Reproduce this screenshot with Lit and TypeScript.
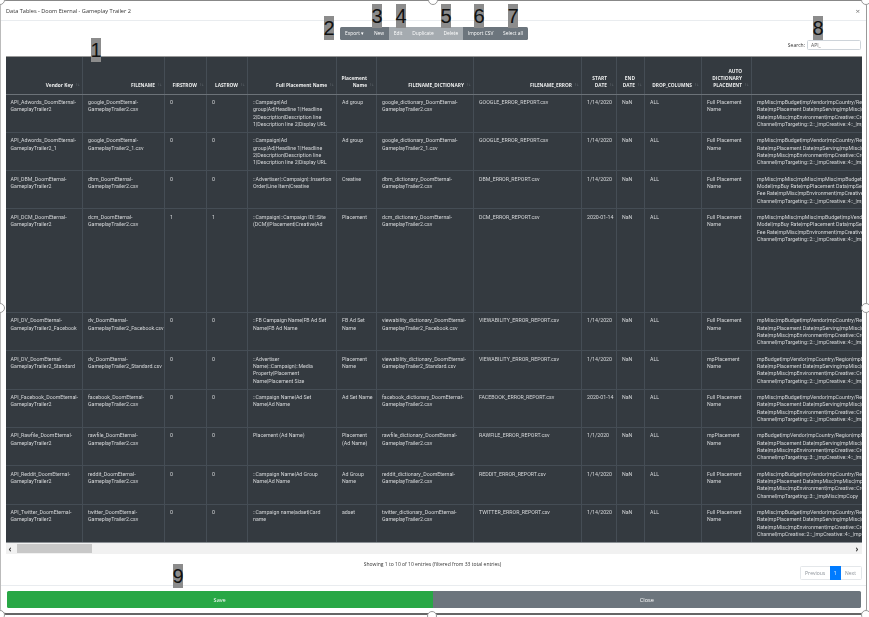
import { LitElement, css, html } from 'lit'
import { customElement } from 'lit/decorators.js'

const sortIcon = html`<span class="sort">↑↓</span>`

const columns = [
  { label: 'Vendor Key', w: 77 },
  { label: 'FILENAME', w: 82 },
  { label: 'FIRSTROW', w: 42 },
  { label: 'LASTROW', w: 41 },
  { label: 'Full Placement Name', w: 89 },
  { label: 'Placement Name', w: 40 },
  { label: 'FILENAME_DICTIONARY', w: 97 },
  { label: 'FILENAME_ERROR', w: 108 },
  { label: 'START DATE', w: 35 },
  { label: 'END DATE', w: 28 },
  { label: 'DROP_COLUMNS', w: 57 },
  { label: 'AUTO DICTIONARY PLACEMENT', w: 50 },
  { label: '', w: 200 }
]
const tableWidth = columns.reduce((sum, c) => sum + c.w, 0)

const buyLine = 'Rate|mpPlacement Date|mpServing|mpMisc|mpServing'
const envLine = 'Rate|mpMisc|mpEnvironment|mpCreative::Creative'
const feeLines = 'Model|mpBuy Rate|mpPlacement Data|mpServing\nFee Rate|mpMisc|mpEnvironment|mpCreative::Creative\nChannel|mpTargeting::2::_|mpCreative::4::_|mpCopy'
const misc = (target: string) => `mpMisc|mpBudget|mpVendor|mpCountry/Region|mpBuy\n${buyLine}\n${envLine}\nChannel|${target}::_|mpCreative::4::_|mpCopy`
const budget = (target: string) => `mpBudget|mpVendor|mpCountry/Region|mpBuy\n${buyLine}\n${envLine}\nChannel|${target}::_|mpCreative::4::_|mpCopy`

const rows: string[][] = [
  ['API_Adwords_DoomEternal-GameplayTrailer2', 'google_DoomEternal-GameplayTrailer2.csv', '0', '0', '::Campaign|Ad group|Ad|Headline 1|Headline 2|Description|Description line 1|Description line 2|Display URL', 'Ad group', 'google_dictionary_DoomEternal-GameplayTrailer2.csv', 'GOOGLE_ERROR_REPORT.csv', '1/14/2020', 'NaN', 'ALL', 'Full Placement Name', misc('mpTargeting::2')],
  ['API_Adwords_DoomEternal-GameplayTrailer2_1', 'google_DoomEternal-GameplayTrailer2_1.csv', '0', '0', '::Campaign|Ad group|Ad|Headline 1|Headline 2|Description|Description line 1|Description line 2|Display URL', 'Ad group', 'google_dictionary_DoomEternal-GameplayTrailer2_1.csv', 'GOOGLE_ERROR_REPORT.csv', '1/14/2020', 'NaN', 'ALL', 'Full Placement Name', misc('mpTargeting::2')],
  ['API_DBM_DoomEternal-GameplayTrailer2', 'dbm_DoomEternal-GameplayTrailer2.csv', '0', '0', '::Advertiser|::Campaign|::Insertion Order|Line Item|Creative', 'Creative', 'dbm_dictionary_DoomEternal-GameplayTrailer2.csv', 'DBM_ERROR_REPORT.csv', '1/14/2020', 'NaN', 'ALL', 'Full Placement Name', `mpMisc|mpMisc|mpMisc|mpMisc|mpBudget|mpVendor\n${feeLines}`],
  ['API_DCM_DoomEternal-GameplayTrailer2', 'dcm_DoomEternal-GameplayTrailer2.csv', '1', '1', '::Campaign|::Campaign ID|::Site (DCM)|Placement|Creative|Ad', 'Placement', 'dcm_dictionary_DoomEternal-GameplayTrailer2.csv', 'DCM_ERROR_REPORT.csv', '2020-01-14', 'NaN', 'ALL', 'Full Placement Name', `mpMisc|mpMisc|mpMisc|mpBudget|mpVendor|mpBuy\n${feeLines}`],
  ['API_DV_DoomEternal-GameplayTrailer2_Facebook', 'dv_DoomEternal-GameplayTrailer2_Facebook.csv', '0', '0', '::FB Campaign Name|FB Ad Set Name|FB Ad Name', 'FB Ad Set Name', 'viewability_dictionary_DoomEternal-GameplayTrailer2_Facebook.csv', 'VIEWABILITY_ERROR_REPORT.csv', '1/14/2020', 'NaN', 'ALL', 'Full Placement Name', misc('mpTargeting::2')],
  ['API_DV_DoomEternal-GameplayTrailer2_Standard', 'dv_DoomEternal-GameplayTrailer2_Standard.csv', '0', '0', '::Advertiser Name|::Campaign|::Media Property|Placement Name|Placement Size', 'Placement Name', 'viewability_dictionary_DoomEternal-GameplayTrailer2_Standard.csv', 'VIEWABILITY_ERROR_REPORT.csv', '1/14/2020', 'NaN', 'ALL', 'mpPlacement Name', budget('mpTargeting::2')],
  ['API_Facebook_DoomEternal-GameplayTrailer2', 'facebook_DoomEternal-GameplayTrailer2.csv', '0', '0', '::Campaign Name|Ad Set Name|Ad Name', 'Ad Set Name', 'facebook_dictionary_DoomEternal-GameplayTrailer2.csv', 'FACEBOOK_ERROR_REPORT.csv', '2020-01-14', 'NaN', 'ALL', 'Full Placement Name', misc('mpTargeting::2')],
  ['API_Rawfile_DoomEternal-GameplayTrailer2', 'rawfile_DoomEternal-GameplayTrailer2.csv', '0', '0', 'Placement (Ad Name)', 'Placement (Ad Name)', 'rawfile_dictionary_DoomEternal-GameplayTrailer2.csv', 'RAWFILE_ERROR_REPORT.csv', '1/1/2020', 'NaN', 'ALL', 'mpPlacement Name', budget('mpTargeting::3')],
  ['API_Reddit_DoomEternal-GameplayTrailer2', 'reddit_DoomEternal-GameplayTrailer2.csv', '0', '0', '::Campaign Name|Ad Group Name|Ad Name', 'Ad Group Name', 'reddit_dictionary_DoomEternal-GameplayTrailer2.csv', 'REDDIT_ERROR_REPORT.csv', '1/14/2020', 'NaN', 'ALL', 'Full Placement Name', `mpMisc|mpBudget|mpVendor|mpCountry/Region|mpBuy\nRate|mpPlacement Data|mpMisc|mpMisc|mpServing\n${envLine}\nChannel|mpTargeting::3::_|mpMisc|mpCopy`],
  ['API_Twitter_DoomEternal-GameplayTrailer2', 'twitter_DoomEternal-GameplayTrailer2.csv', '0', '0', '::Campaign name|adset|Card name', 'adset', 'twitter_dictionary_DoomEternal-GameplayTrailer2.csv', 'TWITTER_ERROR_REPORT.csv', '1/14/2020', 'NaN', 'ALL', 'Full Placement Name', misc('mpCreative::2')]
]

const tools = ['Export ▾', 'New', 'Edit', 'Duplicate', 'Delete', 'Import CSV', 'Select all']
const faded = ['Edit', 'Duplicate', 'Delete']

// numbered callouts that sit on top of the screenshot
const callouts = [
  { n: '1', cls: 'c1' }, { n: '2', cls: 'c2' }, { n: '3', cls: 'c3' },
  { n: '4', cls: 'c4' }, { n: '5', cls: 'c5' }, { n: '6', cls: 'c6' },
  { n: '7', cls: 'c7' }, { n: '8', cls: 'c8' }, { n: '9', cls: 'c9' }
]

@customElement('app-root')
export class AppRoot extends LitElement {
  static styles = css`
    :host {
      display: block;
      position: relative;
      width: 869px;
      height: 617px;
      overflow: hidden;
      background: #fff;
      font-family: "Open Sans", "Liberation Sans", sans-serif;
      color: #212529;
    }

    .modal {
      box-sizing: border-box;
      width: 867px;
      height: 615px;
      border-style: solid;
      border-width: 1.5px 1.5px 2px 1.5px;
      border-color: #888 #999 #666 #bbb;
      border-radius: 6px;
      display: flex;
      flex-direction: column;
      background: #fff;
      filter: blur(0.25px);
    }

    .head {
      height: 20px;
      flex: none;
      display: flex;
      align-items: center;
      justify-content: space-between;
      padding: 0 6px 0 5px;
      border-bottom: 1px solid #e9ecef;
      box-sizing: border-box;
      font-size: 5.6px;
      color: #333;
    }

    .head .x {
      font-size: 8px;
      color: #777;
    }

    .body {
      flex: 1;
      min-height: 0;
      padding: 5.5px 4.5px 0 4.5px;
      display: flex;
      flex-direction: column;
    }

    .toolbar {
      height: 29px;
      flex: none;
      display: flex;
      justify-content: center;
      align-items: flex-start;
      position: relative;
      padding-left: 1px;
    }

    .btns {
      display: flex;
      height: 13px;
      border-radius: 1.5px;
      overflow: hidden;
    }

    .btns span {
      display: flex;
      align-items: center;
      padding: 0 4.85px;
      background: #6c757d;
      color: #fff;
      font-size: 4.9px;
    }

    .btns span.off {
      background: #a5abb0;
    }

    .search {
      position: absolute;
      right: 0.5px;
      top: 13px;
      display: flex;
      align-items: center;
      gap: 2px;
      font-size: 5px;
      color: #333;
    }

    .search .input {
      box-sizing: border-box;
      width: 54px;
      height: 10px;
      border: 1px solid #ced4da;
      border-radius: 1.5px;
      padding-left: 3px;
      line-height: 8px;
      color: #555;
    }

    .scroll {
      flex: none;
      box-sizing: border-box;
      height: 487px;
      overflow: hidden;
      background: #343a40;
      border-bottom: 1px solid #8a8f94;
    }

    table {
      table-layout: fixed;
      border-collapse: collapse;
      background: #343a40;
      color: #d6d8da;
      font-family: Roboto, "Liberation Sans", sans-serif;
      font-size: 5.25px;
      line-height: 7.33px;
    }

    th {
      height: 38px;
      box-sizing: border-box;
      padding: 4px 9px 4px 4.5px;
      text-align: right;
      vertical-align: bottom;
      font-family: "Open Sans", "Liberation Sans", sans-serif;
      font-size: 4.8px;
      font-weight: 700;
      color: #eceded;
      border-left: 1px solid #454d55;
      border-top: 1px solid #999;
      border-bottom: 1.5px solid #6c7278;
      position: relative;
    }

    td {
      height: 38.3px;
      box-sizing: border-box;
      padding: 4.5px 4.5px 3.5px 5px;
      vertical-align: top;
      border: 1px solid #454d55;
      overflow: hidden;
    }

    td:nth-child(5) {
      padding-right: 7.5px;
    }

    td:nth-child(6) {
      padding-right: 3px;
    }

    td.nowrap {
      white-space: nowrap;
    }

    td.lines {
      white-space: pre;
    }

    tr.tall td {
      height: 103.5px;
    }

    th:first-child, td:first-child {
      border-left: 0;
    }

    .sort {
      position: absolute;
      right: 2px;
      bottom: 5px;
      font-size: 4.5px;
      font-weight: 400;
      color: #7d838a;
    }

    .bar {
      flex: none;
      height: 11px;
      background: #f1f1f1;
      display: flex;
      align-items: center;
      justify-content: space-between;
      position: relative;
      padding: 0 3px;
      color: #333;
      font-size: 8px;
      line-height: 11px;
      font-weight: 700;
    }

    .thumb {
      position: absolute;
      left: 11px;
      top: 1px;
      width: 75px;
      height: 9px;
      background: #c8c8c8;
    }

    .foot {
      flex: 1;
      min-height: 0;
      position: relative;
    }

    .info {
      text-align: center;
      font-size: 5px;
      color: #333;
      padding-top: 6px;
      padding-right: 2px;
      line-height: 8px;
    }

    .pager {
      position: absolute;
      right: 0;
      top: 12px;
      display: flex;
      height: 14px;
      border: 1px solid #e4e7ea;
      box-sizing: border-box;
      border-radius: 1.5px;
      font-size: 5px;
      line-height: 12px;
      color: #8a9097;
    }

    .pager span {
      padding: 0 4.5px;
    }

    .pager .on {
      background: #007bff;
      color: #fff;
      padding: 0 4px;
      margin: -1px 0;
      line-height: 14px;
    }

    .actions {
      flex: none;
      height: 28px;
      box-sizing: border-box;
      border-top: 1px solid #e9ecef;
      padding: 5px 5px 0 5.5px;
      display: flex;
    }

    .actions div {
      height: 17px;
      display: flex;
      align-items: center;
      justify-content: center;
      color: #fff;
      font-size: 5.6px;
    }

    .save {
      flex: 426;
      background: #28a745;
      border-radius: 1.5px 0 0 1.5px;
    }

    .close {
      flex: 428;
      background: #6c757d;
      border-radius: 0 1.5px 1.5px 0;
    }

    .callout {
      position: absolute;
      background: #8c8c8c;
      color: #111;
      font-family: "Liberation Sans", sans-serif;
      font-size: 20px;
      line-height: 24px;
      width: 10px;
      height: 24px;
      display: flex;
      justify-content: center;
    }

    .c1 { left: 91px; top: 38px; }
    .c2 { left: 324px; top: 16px; }
    .c3 { left: 372px; top: 4px; }
    .c4 { left: 396px; top: 4px; }
    .c5 { left: 441px; top: 4px; }
    .c6 { left: 474px; top: 4px; }
    .c7 { left: 508px; top: 4px; }
    .c8 { left: 813px; top: 16px; }
    .c9 { left: 173px; top: 564px; }

    .handle {
      position: absolute;
      box-sizing: border-box;
      width: 10px;
      height: 10px;
      border: 1px solid #999;
      border-radius: 50%;
      background: #fff;
    }

    .h-top { left: 428px; top: -5px; }
    .h-left { left: -5px; top: 303px; }
    .h-right { left: 861px; top: 303px; }
    .h-bottom { left: 427px; top: 611px; }
    .h-tl { left: -5px; top: -5px; }
    .h-tr { left: 861px; top: -5px; }
    .h-bl { left: -5px; top: 610px; }
    .h-br { left: 861px; top: 610px; }
  `

  render() {
    return html`
      <div class="modal">
        <div class="head">
          <span>Data Tables - Doom Eternal - Gameplay Trailer 2</span>
          <span class="x">×</span>
        </div>
        <div class="body">
          <div class="toolbar">
            <div class="btns">
              ${tools.map(t => html`<span class=${faded.includes(t) ? 'off' : ''}>${t}</span>`)}
            </div>
            <div class="search">Search: <div class="input">API_</div></div>
          </div>
          <div class="scroll">
            <table style="width:${tableWidth}px">
              <colgroup>${columns.map(c => html`<col style="width:${c.w}px" />`)}</colgroup>
              <thead>
                <tr>${columns.map(c => html`<th>${c.label}${c.label ? sortIcon : ''}</th>`)}</tr>
              </thead>
              <tbody>
                ${rows.map((r, i) => html`
                  <tr class=${i === 3 ? 'tall' : ''}>
                    ${r.map((v, j) => html`<td class=${j === 8 ? 'nowrap' : j === 12 ? 'lines' : ''}>${v}</td>`)}
                  </tr>
                `)}
              </tbody>
            </table>
          </div>
          <div class="bar">
            <span>‹</span>
            <div class="thumb"></div>
            <span>›</span>
          </div>
          <div class="foot">
            <div class="info">Showing 1 to 10 of 10 entries (filtered from 33 total entries)</div>
            <div class="pager">
              <span>Previous</span><span class="on">1</span><span>Next</span>
            </div>
          </div>
        </div>
        <div class="actions">
          <div class="save">Save</div>
          <div class="close">Close</div>
        </div>
      </div>
      ${['h-tl', 'h-top', 'h-tr', 'h-left', 'h-right', 'h-bl', 'h-bottom', 'h-br'].map(h => html`<div class="handle ${h}"></div>`)}
      ${callouts.map(c => html`<div class="callout ${c.cls}">${c.n}</div>`)}
    `
  }
}

declare global {
  interface HTMLElementTagNameMap {
    'app-root': AppRoot
  }
}
